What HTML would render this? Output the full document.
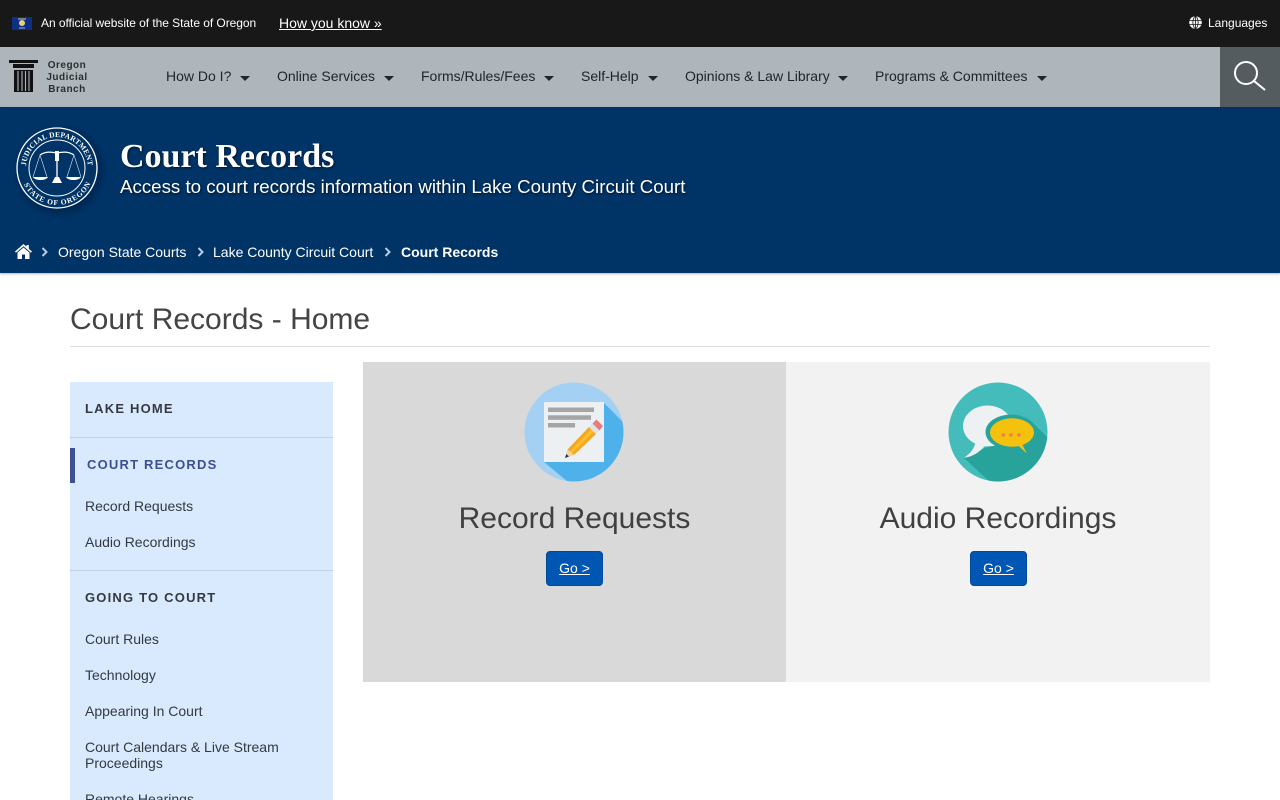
<!DOCTYPE html>
<html lang="en"><head><meta charset="utf-8"><title>Court Records - Home</title>
<style>
*{box-sizing:border-box}
html,body{margin:0;padding:0;width:1280px;height:800px;overflow:hidden;background:#fff;font-family:"Liberation Sans",sans-serif}
.a{position:absolute;white-space:nowrap}
a{color:inherit;text-decoration:none}
#top{position:absolute;left:0;top:0;width:1280px;height:47px;background:#181818;color:#fff}
#nav{position:absolute;left:0;top:47px;width:1280px;height:60px;background:#aeb6bb}
#nav .i{position:absolute;top:20px;font-size:14px;line-height:18px;color:#212529;white-space:nowrap}
#nav .c{position:absolute;top:29px;width:0;height:0;border-left:5px solid transparent;border-right:5px solid transparent;border-top:5px solid #212529}
#srch{position:absolute;left:1220px;top:0;width:60px;height:60px;background:#555c5f}
#hero{position:absolute;left:0;top:107px;width:1280px;height:166px;background:#003366;color:#fff;box-shadow:0 1px 2px rgba(0,0,0,.3)}
.bc{position:absolute;top:136px;font-size:14px;line-height:18px;color:#fff;white-space:nowrap}
.side{position:absolute;left:70px;top:382px;width:263px;height:418px;background:#d9eaff;overflow:hidden}
.side .h{position:absolute;left:15px;font-size:13px;font-weight:bold;letter-spacing:1.2px;color:#33393f;line-height:18px;white-space:nowrap}
.side .l{position:absolute;left:15px;font-size:14px;line-height:16px;color:#33393f;white-space:nowrap}
.side hr{position:absolute;left:0;width:263px;margin:0;border:0;height:1px;background:#bdd0e4}
.btn{position:absolute;top:551px;width:57px;height:35px;background:#0056b3;border:1px solid #004a99;border-radius:4px;color:#fff;font-size:14px;line-height:33px;text-align:center;text-decoration:underline}
.t{position:absolute;top:501px;font-size:30px;line-height:36px;color:#404040;text-align:center;white-space:nowrap}
</style></head><body>
<div id="top">
<svg class="a" style="left:12px;top:17px" width="20" height="13" viewBox="0 0 20 13"><rect width="20" height="13" fill="#0d2f86"/><circle cx="10" cy="6" r="3" fill="#e6cf7a"/><rect x="6" y="1.500" width="8" height="1" fill="#cbd2a0"/><rect x="7" y="10.500" width="6" height="1" fill="#a9b3c9"/></svg>
<div class="a" style="left:41px;top:15px;font-size:12px;line-height:16px;letter-spacing:-.05px">An official website of the State of Oregon</div>
<a class="a" style="left:279px;top:15px;font-size:14px;line-height:17px;text-decoration:underline">How you know »</a>
<svg class="a" style="left:1189px;top:16px" width="13" height="13" viewBox="0 0 13 13"><circle cx="6.500" cy="6.500" r="6.300" fill="#f4f4f4"/><path d="M0 4.500H13M0 8.500H13M6.500 0V13M6.500 0C3 3 3 10 6.500 13M6.500 0C10 3 10 10 6.500 13" stroke="#181818" stroke-width=".8" fill="none"/></svg>
<div class="a" style="left:1208px;top:15px;font-size:12px;line-height:16px">Languages</div>
</div>
<div id="nav">
<svg class="a" style="left:9px;top:13px" width="30" height="32" viewBox="0 0 30 32"><rect x="0" y="0" width="29" height="3" fill="#111"/><rect x="4" y="4" width="21" height="4" fill="#111"/><rect x="5" y="10" width="19" height="22" fill="#111"/><path d="M9 11V31M13 11V31M16.500 11V31M20 11V31" stroke="#aeb6bb" stroke-width="1.100"/></svg>
<div class="a" style="left:44px;top:13px;width:46px;text-align:center;font-size:10px;line-height:12px;font-weight:bold;letter-spacing:.5px;color:#2a2e30">Oregon<br>Judicial<br>Branch</div>
<a class="i" style="left:166px">How Do I?</a><span class="c" style="left:240px"></span>
<a class="i" style="left:277px">Online Services</a><span class="c" style="left:384px"></span>
<a class="i" style="left:421px">Forms/Rules/Fees</a><span class="c" style="left:544px"></span>
<a class="i" style="left:581px">Self-Help</a><span class="c" style="left:648px"></span>
<a class="i" style="left:685px">Opinions &amp; Law Library</a><span class="c" style="left:838px"></span>
<a class="i" style="left:875px">Programs &amp; Committees</a><span class="c" style="left:1037px"></span>
<div id="srch"><svg width="60" height="60" viewBox="0 0 60 60"><circle cx="26" cy="26" r="11" fill="none" stroke="#fff" stroke-width="2"/><path d="M34 34L45 43" stroke="#fff" stroke-width="2"/></svg></div>
</div>
<div id="hero">
<svg class="a" style="left:14px;top:18px" width="96" height="96" viewBox="0 0 96 96">
<defs><radialGradient id="gl"><stop offset=".8" stop-color="#001f44" stop-opacity=".55"/><stop offset="1" stop-color="#001f44" stop-opacity="0"/></radialGradient>
<path id="o" d="M43 43m-31 0a31 31 0 1 1 62 0"/><path id="u" d="M43 43m-37 0a37 37 0 0 0 74 0"/></defs>
<circle cx="46" cy="46" r="48" fill="url(#gl)"/>
<circle cx="43" cy="43" r="40" fill="#003366" stroke="#fff" stroke-width="1.300"/>
<circle cx="43" cy="43" r="28" fill="none" stroke="#fff" stroke-width="1"/>
<text font-family="Liberation Serif" font-size="7.500" font-weight="bold" fill="#fff"><textPath href="#o" startOffset="2" textLength="93">JUDICIAL DEPARTMENT</textPath></text>
<text font-family="Liberation Serif" font-size="7.500" font-weight="bold" fill="#fff"><textPath href="#u" startOffset="17" textLength="83">STATE OF OREGON</textPath></text>
<path d="M43 27V55M26 30C32 26 38 27 43 28C48 27 54 26 60 30" stroke="#fff" stroke-width="1.300" fill="none"/>
<path d="M41 26H45V36H41ZM38 58L41 52H45L48 58Z" fill="#fff"/>
<path d="M26 30L19 52M26 30L33 52M60 30L53 52M60 30L67 52" stroke="#dbe3ec" stroke-width=".6"/>
<path d="M19 52H34C32 56 21 56 19 52ZM52 52H67C65 56 54 56 52 52Z" fill="#fff"/>
</svg>
<div class="a" style="left:120px;top:31px;font-family:'Liberation Serif',serif;font-size:34px;line-height:38px;font-weight:bold;text-shadow:1px 1px 2px rgba(0,0,0,.6)">Court Records</div>
<div class="a" style="left:120px;top:68px;font-size:18.720px;line-height:23px;text-shadow:1px 1px 2px rgba(0,0,0,.6)">Access to court records information within Lake County Circuit Court</div>
<svg class="a" style="left:15px;top:137px" width="17" height="15" viewBox="0 0 17 15"><path d="M8.500 0L0 7.500L1 8.700L8.500 2.300L16 8.700L17 7.500L13.800 4.700V1H11.500V2.700Z" fill="#fff"/><path d="M8.500 3.500L2.500 8.600V15H7V10.500H10V15H14.500V8.600Z" fill="#fff"/></svg>
<svg class="a" style="left:41px;top:140px" width="7" height="10" viewBox="0 0 7 10"><path d="M1.500 1L5.500 5L1.500 9" fill="none" stroke="#b9cbe2" stroke-width="2"/></svg>
<a class="bc" style="left:58px">Oregon State Courts</a>
<svg class="a" style="left:197px;top:140px" width="7" height="10" viewBox="0 0 7 10"><path d="M1.500 1L5.500 5L1.500 9" fill="none" stroke="#b9cbe2" stroke-width="2"/></svg>
<a class="bc" style="left:213px">Lake County Circuit Court</a>
<svg class="a" style="left:384px;top:140px" width="7" height="10" viewBox="0 0 7 10"><path d="M1.500 1L5.500 5L1.500 9" fill="none" stroke="#b9cbe2" stroke-width="2"/></svg>
<a class="bc" style="left:401px;font-weight:bold">Court Records</a>
</div>
<div class="a" style="left:70px;top:301px;font-size:30px;line-height:37px;color:#444">Court Records - Home</div>
<div class="a" style="left:70px;top:346px;width:1140px;height:1px;background:#dcdcdc"></div>
<div class="side">
<a class="h" style="top:18px">LAKE HOME</a>
<hr style="top:55px">
<div class="a" style="left:0;top:66px;width:5px;height:35px;background:#3c4f91"></div>
<a class="h" style="top:74px;left:17px;color:#3c4f91">COURT RECORDS</a>
<a class="l" style="top:116px">Record Requests</a>
<a class="l" style="top:152px">Audio Recordings</a>
<hr style="top:188px">
<a class="h" style="top:207px">GOING TO COURT</a>
<a class="l" style="top:249px">Court Rules</a>
<a class="l" style="top:285px">Technology</a>
<a class="l" style="top:321px">Appearing In Court</a>
<a class="l" style="top:357px">Court Calendars &amp; Live Stream<br>Proceedings</a>
<a class="l" style="top:409px">Remote Hearings</a>
</div>
<div class="a" style="left:363px;top:362px;width:423px;height:320px;background:#d9d9d9"></div>
<div class="a" style="left:786px;top:362px;width:424px;height:320px;background:#f2f2f2"></div>
<svg class="a" style="left:524px;top:382px" width="100" height="100" viewBox="0 0 100 100">
<defs><clipPath id="c1"><circle cx="50" cy="50" r="49.500"/></clipPath></defs>
<circle cx="50" cy="50" r="49.500" fill="#a4d1f3"/>
<path d="M80 21L100 41V100H44L20 80Z" fill="#4fb1ea" clip-path="url(#c1)"/>
<rect x="20" y="20" width="60" height="60" fill="#edf0f2"/>
<rect x="24" y="25.500" width="46" height="4.500" fill="#a5a5a5"/><rect x="24" y="33.300" width="43" height="4.500" fill="#a5a5a5"/><rect x="24" y="41" width="27" height="4.500" fill="#a5a5a5"/>
<path d="M43.500 67.500L65 45L72 52L50 73Z" fill="#f5a623"/>
<path d="M45.800 69.500L67.300 47.300L69.700 49.700L48 71Z" fill="#fbc02d"/>
<path d="M65 45L68.500 41.500L75.500 48.500L72 52Z" fill="#dfe3e6"/>
<path d="M68.500 41.500L72.500 37.500L79 44L75.500 48.500Z" fill="#e77c7c"/>
<path d="M41 76L43.500 67.500L50 73Z" fill="#f2d6a0"/>
<path d="M41 76L42.300 72L45 74.500Z" fill="#333"/>
</svg>
<svg class="a" style="left:948px;top:382px" width="100" height="100" viewBox="0 0 100 100">
<defs><clipPath id="c2"><circle cx="50" cy="50" r="49.500"/></clipPath></defs>
<circle cx="50" cy="50" r="49.500" fill="#44bcbc"/>
<path d="M16 76L50 60L84 40L100 56V100H42Z" fill="#27a39c" clip-path="url(#c2)"/>
<ellipse cx="39.500" cy="44" rx="24.500" ry="20.500" fill="#edf1f3"/>
<path d="M16 75.700C22 72 26 67 27.700 60L37 63.700C32 70 24 75 16 75.700Z" fill="#edf1f3"/>
<ellipse cx="63" cy="50" rx="25.500" ry="17.500" fill="#27a39c"/>
<path d="M66 64L78.700 72C74 71 68 68 66 64Z" fill="#27a39c"/>
<ellipse cx="64" cy="50.500" rx="22" ry="14.200" fill="#f4c20d"/>
<path d="M69.700 63L74.500 63L78.700 71.500Z" fill="#f4c20d"/>
<circle cx="55.300" cy="53" r="1.800" fill="#ee7f4d"/><circle cx="63" cy="53" r="1.800" fill="#ee7f4d"/><circle cx="71" cy="53" r="1.800" fill="#ee7f4d"/>
</svg>
<div class="t" style="left:363px;width:423px">Record Requests</div>
<div class="t" style="left:786px;width:424px">Audio Recordings</div>
<a class="btn" style="left:546px">Go &gt;</a>
<a class="btn" style="left:970px">Go &gt;</a>
</body></html>
